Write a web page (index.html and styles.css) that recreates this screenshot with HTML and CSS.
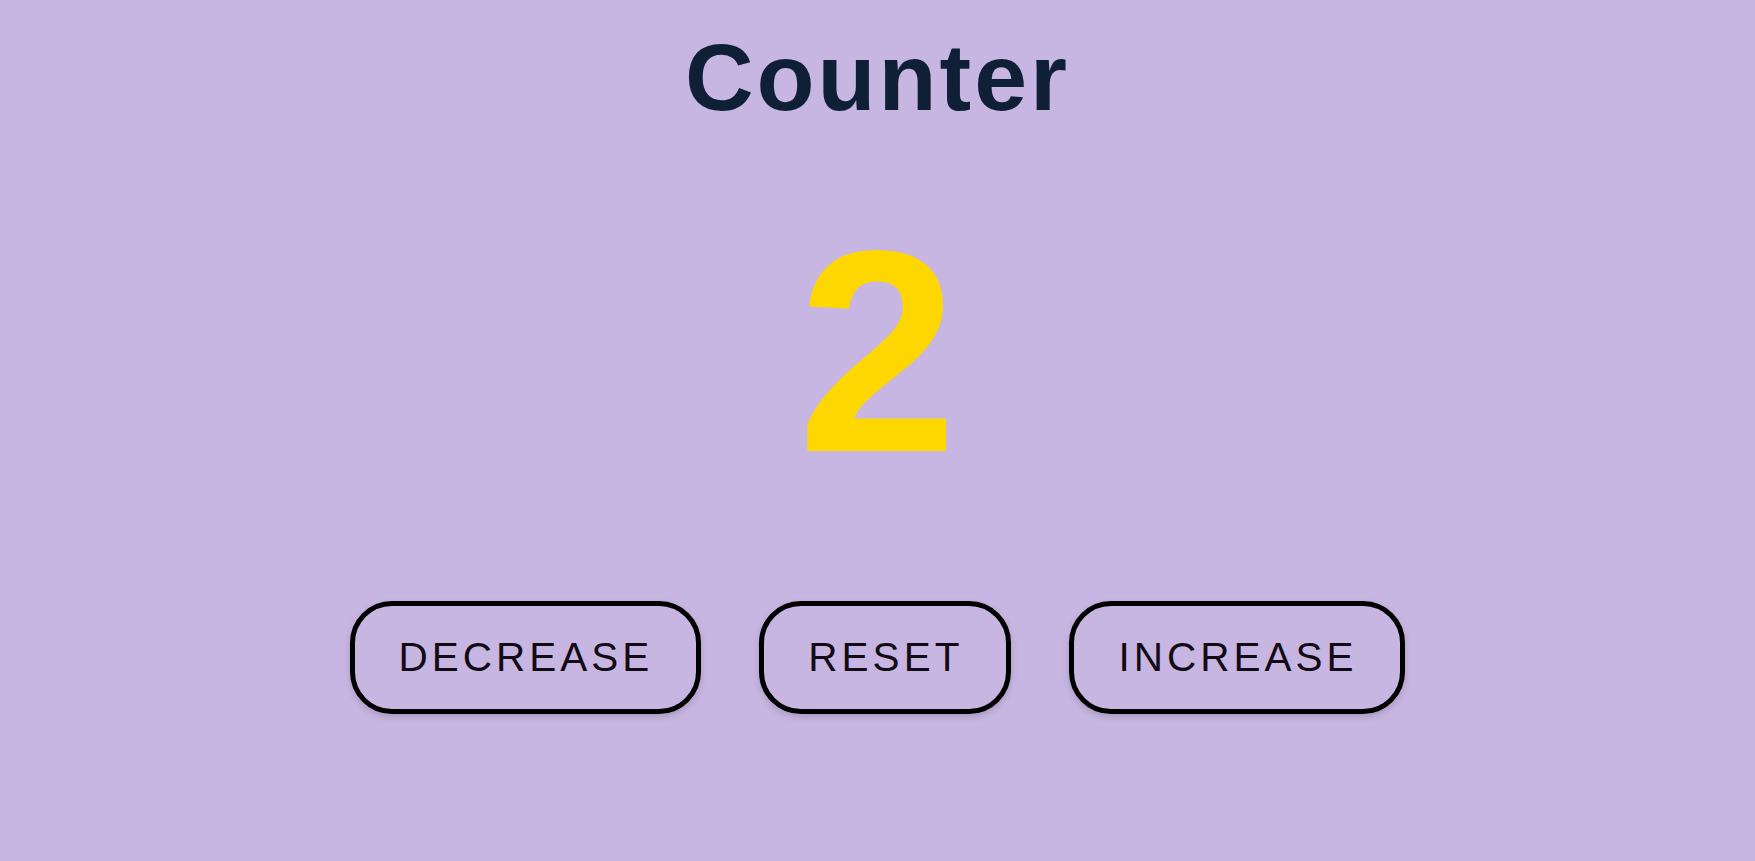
FILE: index.html
```html
<!DOCTYPE html>
<html lang="en">
<head>
<meta charset="utf-8">
<title>Counter</title>
<link rel="stylesheet" href="styles.css">
</head>
<body>
<main class="counter">
  <h1 class="counter-title">Counter</h1>
  <div class="counter-value">2</div>
  <div class="counter-buttons">
    <button class="btn" type="button">DECREASE</button>
    <button class="btn" type="button">RESET</button>
    <button class="btn" type="button">INCREASE</button>
  </div>
</main>
</body>
</html>
```

FILE: styles.css
```css
html, body {
  margin: 0;
  padding: 0;
}

body {
  background: #c8b6e2;
  font-family: "Liberation Sans", Arial, sans-serif;
  min-height: 100vh;
}

.counter {
  display: flex;
  flex-direction: column;
  align-items: center;
  padding-top: 22px;
}

.counter-title {
  margin: 0 0 74px;
  font-size: 95px;
  line-height: 110px;
  font-weight: 700;
  letter-spacing: 3px;
  color: #0e1f36;
}

.counter-value {
  margin: 0 0 105px;
  font-size: 288px;
  line-height: 290px;
  font-weight: 700;
  color: #ffd700;
}

.counter-buttons {
  display: flex;
  gap: 58px;
}

.btn {
  font-family: "Liberation Sans", Arial, sans-serif;
  font-size: 40.5px;
  line-height: 46px;
  letter-spacing: 4px;
  color: #120a14;
  background: transparent;
  border: 5px solid #000;
  border-radius: 42px;
  padding: 28px 43px 29px 44px;
  box-shadow: 0 3px 7px rgba(0, 0, 0, 0.16);
  cursor: pointer;
}
```
